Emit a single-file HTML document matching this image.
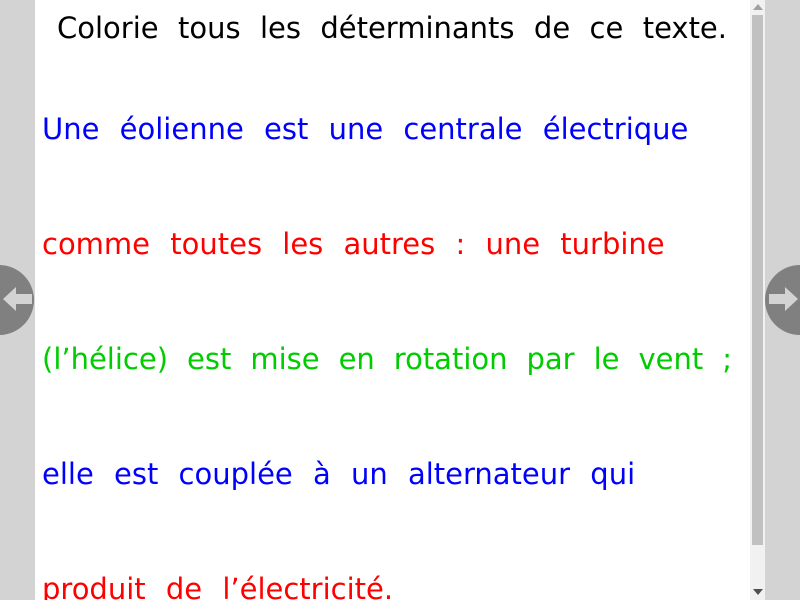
<!DOCTYPE html>
<html style="overflow:hidden"><head><meta charset="utf-8"><style>
html,body{margin:0;width:800px;height:600px;overflow:hidden}
body{background:#d3d3d3;position:relative;font-family:"DejaVu Sans","Liberation Sans",sans-serif}
.page{position:absolute;left:35px;top:0;width:715px;height:600px;background:#fff}
.sb{position:absolute;left:750px;top:0;width:15px;height:600px;background:#f1f1f1}
.thumb{position:absolute;left:752px;top:15px;width:11px;height:530px;background:#c1c1c1}
.l{position:absolute;font-size:29px;white-space:nowrap;word-spacing:11px;line-height:36px}
.t{position:absolute;left:57px;top:10px;width:670px;font-size:29px;text-align:justify;text-align-last:justify;line-height:36px;color:#000;white-space:nowrap}
.c{position:absolute;width:70px;height:70px;border-radius:50%;background:#808080;top:265px}
</style></head><body>
<div class="page"></div>
<div class="sb"></div><div class="thumb"></div>
<svg style="position:absolute;left:753px;top:4px" width="10" height="6"><polygon points="0,6 5,0 10,6" fill="#a0a0a0"/></svg>
<svg style="position:absolute;left:753px;top:589px" width="10" height="6"><polygon points="0,0 5,6 10,0" fill="#505050"/></svg>
<div class="t">Colorie tous les déterminants de ce texte.</div>
<div class="l" style="left:42px;top:111px;color:#0000ff">Une éolienne est une centrale électrique</div>
<div class="l" style="left:42px;top:226px;color:#ff0000">comme toutes les autres : une turbine</div>
<div class="l" style="left:42px;top:341px;color:#00cc00;width:690px;text-align:justify;text-align-last:justify;word-spacing:0">(l’hélice) est mise en rotation par le vent ;</div>
<div class="l" style="left:42px;top:456px;color:#0000ff">elle est couplée à un alternateur qui</div>
<div class="l" style="left:42px;top:571px;color:#ff0000">produit de l’électricité.</div>
<div class="c" style="left:-36px"></div>
<div class="c" style="left:765px"></div>
<svg style="position:absolute;left:3px;top:286px" width="30" height="26"><polygon points="0,13 13,1 13,8 29,8 29,18 13,18 13,25" fill="#d3d3d3"/></svg>
<svg style="position:absolute;left:768px;top:286px" width="30" height="26"><polygon points="30,13 17,1 17,8 1,8 1,18 17,18 17,25" fill="#d3d3d3"/></svg>
</body></html>
